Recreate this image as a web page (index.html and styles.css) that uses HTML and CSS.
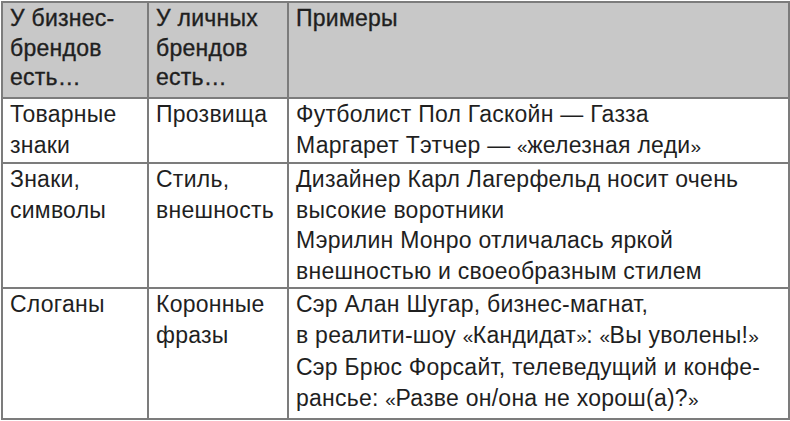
FILE: index.html
```html
<!DOCTYPE html>
<html lang="ru">
<head>
<meta charset="utf-8">
<link rel="stylesheet" href="styles.css">
</head>
<body>
<table class="brands">
  <colgroup>
    <col class="c1">
    <col class="c2">
    <col class="c3">
  </colgroup>
  <thead>
    <tr class="head">
      <th>У бизнес-<br>брендов<br>есть<span class="dots">…</span></th>
      <th>У личных<br>брендов<br>есть<span class="dots">…</span></th>
      <th>Примеры</th>
    </tr>
  </thead>
  <tbody>
    <tr class="r1">
      <td>Товарные<br>знаки</td>
      <td>Прозвища</td>
      <td>Футболист Пол Гаскойн — Газза<br>Маргарет Тэтчер — <span class="q">«</span>железная леди<span class="q">»</span></td>
    </tr>
    <tr class="r2">
      <td>Знаки,<br>символы</td>
      <td>Стиль,<br>внешность</td>
      <td>Дизайнер Карл Лагерфельд носит очень<br>высокие воротники<br>Мэрилин Монро отличалась яркой<br>внешностью и своеобразным стилем</td>
    </tr>
    <tr class="r3">
      <td>Слоганы</td>
      <td>Коронные<br>фразы</td>
      <td>Сэр Алан Шугар, бизнес-магнат,<br>в реалити-шоу <span class="q">«</span>Кандидат<span class="q">»</span>: <span class="q">«</span>Вы уволены!<span class="q">»</span><br>Сэр Брюс Форсайт, телеведущий и конфе-<br>рансье: <span class="q">«</span>Разве он/она не хорош(а)?<span class="q">»</span></td>
    </tr>
  </tbody>
</table>
</body>
</html>
```
FILE: styles.css
```css
html, body {
  margin: 0;
  padding: 0;
  background: #ffffff;
}

.brands {
  border-collapse: collapse;
  width: 787px;
  table-layout: fixed;
  font-family: "Liberation Sans", Arial, sans-serif;
  font-size: 23px;
  letter-spacing: 0.25px;
  color: #1f1f1f;
  margin: 1px 0 0 1px;
}

.c1 { width: 146px; }
.c2 { width: 140px; }
.c3 { width: 501px; }

.brands th,
.brands td {
  border: 2px solid #7c7c7c;
  text-align: left;
  vertical-align: top;
  padding: 0 2px 0 7px;
  line-height: 30.5px;
  font-weight: normal;
  white-space: nowrap;
  overflow: hidden;
}

.head th {
  background: #c8c8c8;
  height: 93px;
  line-height: 29.5px;
  padding-top: 1px;
  -webkit-text-stroke: 0.35px #1f1f1f;
}

.dots {
  letter-spacing: 2px;
}

.q {
  font-size: 19px;
  letter-spacing: -0.5px;
}

.r1 td { height: 63px; }
.r2 td { height: 123px; }
.r3 td { height: 129px; }
```
